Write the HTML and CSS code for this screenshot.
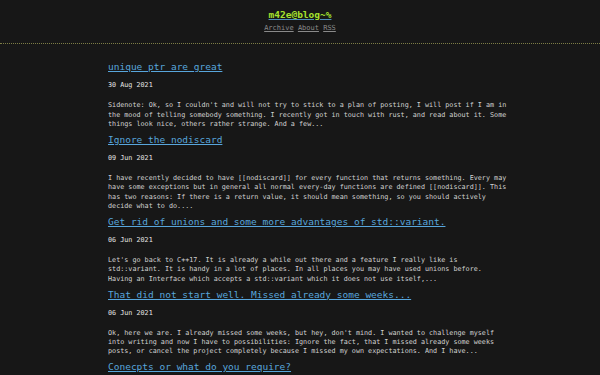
FILE: index.html
```html
<!DOCTYPE html>
<html lang="en">
<head>
    <meta charset="UTF-8">
    <meta name="viewport" content="width=device-width, initial-scale=1.0">
    <title>m42e@blog~%</title>
    <link rel="stylesheet" href="styles.css">
</head>
<body>

    <!-- Site Header -->
    <header class="site-header">
        <a class="site-title" href="#">m42e@blog~%</a>
        <nav class="site-nav">
            <a href="#">Archive</a>
            <a href="#">About</a>
            <a href="#">RSS</a>
        </nav>
    </header>

    <main class="posts">
        <article class="post">
            <h2 class="post-title"><a href="#">unique_ptr are great</a></h2>
            <p class="post-date">30 Aug 2021</p>
            <p class="post-summary">Sidenote: Ok, so I couldn't and will not try to stick to a plan of posting, I will post if I am in the mood of telling somebody something. I recently got in touch with rust, and read about it. Some things look nice, others rather strange. And a few...</p>
        </article>

        <article class="post">
            <h2 class="post-title"><a href="#">Ignore the nodiscard</a></h2>
            <p class="post-date">09 Jun 2021</p>
            <p class="post-summary">I have recently decided to have [[nodiscard]] for every function that returns something. Every may have some exceptions but in general all normal every-day functions are defined [[nodiscard]]. This has two reasons: If there is a return value, it should mean something, so you should actively decide what to do....</p>
        </article>

        <article class="post">
            <h2 class="post-title"><a href="#">Get rid of unions and some more advantages of std::variant.</a></h2>
            <p class="post-date">06 Jun 2021</p>
            <p class="post-summary">Let's go back to C++17. It is already a while out there and a feature I really like is std::variant. It is handy in a lot of places. In all places you may have used unions before. Having an Interface which accepts a std::variant which it does not use itself,...</p>
        </article>

        <article class="post">
            <h2 class="post-title"><a href="#">That did not start well. Missed already some weeks...</a></h2>
            <p class="post-date">06 Jun 2021</p>
            <p class="post-summary">Ok, here we are. I already missed some weeks, but hey, don't mind. I wanted to challenge myself into writing and now I have to possibilities: Ignore the fact, that I missed already some weeks posts, or cancel the project completely because I missed my own expectations. And I have...</p>
        </article>

        <article class="post">
            <h2 class="post-title"><a href="#">Conecpts or what do you require?</a></h2>
        </article>
    </main>

</body>
</html>
```

FILE: styles.css
```css
/* Reset */
* {
    margin: 0;
    padding: 0;
    box-sizing: border-box;
}

body {
    font-family: 'DejaVu Sans Mono', monospace;
    background-color: #171717;
    color: #cfcfcf;
    overflow: hidden;
}

/* Header */
.site-header {
    display: flex;
    flex-direction: column;
    align-items: center;
    gap: 1px;
    padding: 8px 0 10px;
    border-bottom: 1px dotted #7d7d45;
}

.site-title {
    font-size: 9.5px;
    line-height: 14px;
    font-weight: bold;
    color: #a6e22e;
    text-decoration: underline;
    text-decoration-color: #4f8fb8;
}

.site-nav {
    font-size: 7px;
    line-height: 10px;
}

.site-nav a {
    color: #8a8a8a;
}

/* Post list */
.posts {
    width: 416px;
    margin: 0 auto;
    padding: 16px 0 0 16px;
}

.post-title {
    font-size: 9.5px;
    line-height: 14px;
    font-weight: normal;
    margin-bottom: 7px;
}

.post-title a {
    color: #58a6dc;
}

.post-date {
    font-size: 6.75px;
    line-height: 9.25px;
    color: #e6e6e6;
    margin-bottom: 11px;
}

.post-summary {
    font-size: 6.75px;
    line-height: 9.25px;
    color: #d2d2d2;
    margin-bottom: 3.75px;
}
```
